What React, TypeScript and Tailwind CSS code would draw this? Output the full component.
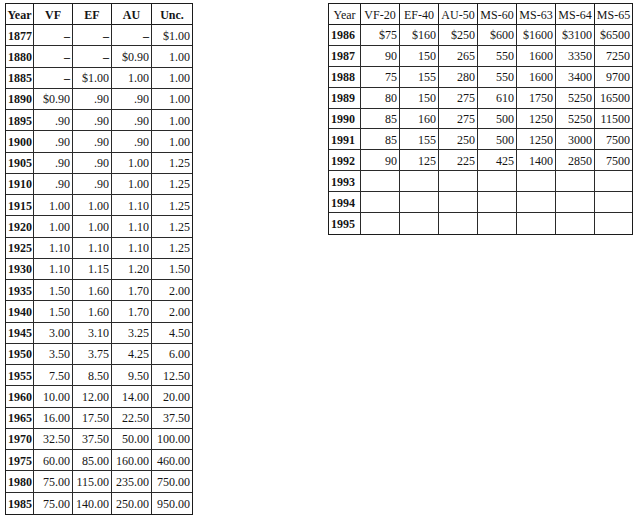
const leftRows: [string, string, string, string, string][] = [
  ["1877", "–", "–", "–", "$1.00"],
  ["1880", "–", "–", "$0.90", "1.00"],
  ["1885", "–", "$1.00", "1.00", "1.00"],
  ["1890", "$0.90", ".90", ".90", "1.00"],
  ["1895", ".90", ".90", ".90", "1.00"],
  ["1900", ".90", ".90", ".90", "1.00"],
  ["1905", ".90", ".90", "1.00", "1.25"],
  ["1910", ".90", ".90", "1.00", "1.25"],
  ["1915", "1.00", "1.00", "1.10", "1.25"],
  ["1920", "1.00", "1.00", "1.10", "1.25"],
  ["1925", "1.10", "1.10", "1.10", "1.25"],
  ["1930", "1.10", "1.15", "1.20", "1.50"],
  ["1935", "1.50", "1.60", "1.70", "2.00"],
  ["1940", "1.50", "1.60", "1.70", "2.00"],
  ["1945", "3.00", "3.10", "3.25", "4.50"],
  ["1950", "3.50", "3.75", "4.25", "6.00"],
  ["1955", "7.50", "8.50", "9.50", "12.50"],
  ["1960", "10.00", "12.00", "14.00", "20.00"],
  ["1965", "16.00", "17.50", "22.50", "37.50"],
  ["1970", "32.50", "37.50", "50.00", "100.00"],
  ["1975", "60.00", "85.00", "160.00", "460.00"],
  ["1980", "75.00", "115.00", "235.00", "750.00"],
  ["1985", "75.00", "140.00", "250.00", "950.00"],
]

const rightHead = ["Year", "VF-20", "EF-40", "AU-50", "MS-60", "MS-63", "MS-64", "MS-65"]

const rightRows: string[][] = [
  ["1986", "$75", "$160", "$250", "$600", "$1600", "$3100", "$6500"],
  ["1987", "90", "150", "265", "550", "1600", "3350", "7250"],
  ["1988", "75", "155", "280", "550", "1600", "3400", "9700"],
  ["1989", "80", "150", "275", "610", "1750", "5250", "16500"],
  ["1990", "85", "160", "275", "500", "1250", "5250", "11500"],
  ["1991", "85", "155", "250", "500", "1250", "3000", "7500"],
  ["1992", "90", "125", "225", "425", "1400", "2850", "7500"],
  ["1993", "", "", "", "", "", "", ""],
  ["1994", "", "", "", "", "", "", ""],
  ["1995", "", "", "", "", "", "", ""],
]

const leftCols = ["w-[27px]", "w-[39px]", "w-[39px]", "w-[40px]", "w-[41px]"]
const rightCols = ["w-[31px]", "w-[39px]", "w-[39px]", "w-[39px]", "w-[39px]", "w-[39px]", "w-[39px]", "w-[38px]"]

function PriceTable({
  head,
  rows,
  cols,
  boldHead,
  rowH,
}: {
  head: string[]
  rows: string[][]
  cols: string[]
  boldHead: boolean
  rowH: string
}) {
  return (
    <div className="border border-[#1c1c1c] bg-white">
      <div className="flex h-[21px] border-b border-[#1c1c1c]">
        {head.map((h, i) => (
          <div
            key={h}
            className={`${cols[i]} shrink-0 flex items-center justify-center pt-[1px] ${i > 0 ? "border-l border-[#1c1c1c]" : ""} ${boldHead ? "font-bold" : ""}`}
          >
            {h}
          </div>
        ))}
      </div>
      {rows.map((r, ri) => (
        <div
          key={r[0]}
          className={`flex ${rowH} ${ri < rows.length - 1 ? "border-b border-[#2a2a2a]" : ""}`}
        >
          {r.map((c, ci) => (
            <div
              key={ci}
              className={`${cols[ci]} shrink-0 flex items-center pt-[1px] ${ci === 0 ? "justify-start pl-[2px] font-bold" : "justify-end pr-[2px] border-l border-[#2a2a2a]"} ${c === "–" ? "font-bold" : ""}`}
            >
              {c}
            </div>
          ))}
        </div>
      ))}
    </div>
  )
}

export default function App() {
  return (
    <div
      className="w-[635px] h-[519px] bg-white text-[#151515] text-[12px] leading-none flex items-start pl-[5px] pt-[3px] gap-[135px]"
      style={{ fontFamily: '"Liberation Serif", "DejaVu Serif", serif' }}
    >
      <PriceTable head={["Year", "VF", "EF", "AU", "Unc."]} rows={leftRows} cols={leftCols} boldHead rowH="h-[21.25px]" />
      <PriceTable head={rightHead} rows={rightRows} cols={rightCols} boldHead={false} rowH="h-[20.9px]" />
    </div>
  )
}
